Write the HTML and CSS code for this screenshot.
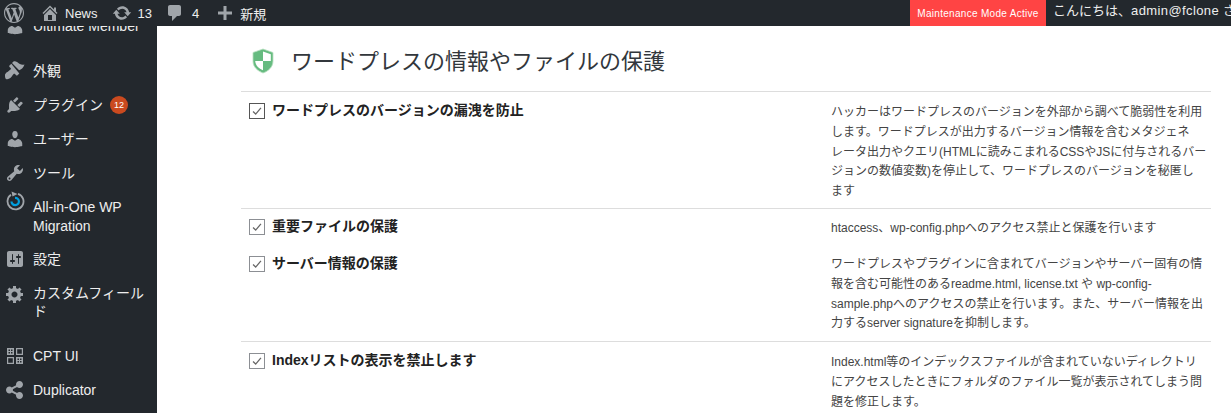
FILE: index.html
```html
<!DOCTYPE html>
<html lang="ja">
<head>
<meta charset="utf-8">
<title>ワードプレスの情報やファイルの保護</title>
<link rel="stylesheet" href="styles.css">
</head>
<body>
<header class="adminbar">
  <div class="bar-left">
    <svg class="bar-logo" viewBox="0 0 20 20"><path fill-rule="evenodd" d="M20 10c0-5.510-4.490-10-10-10C4.480 0 0 4.490 0 10c0 5.520 4.480 10 10 10 5.510 0 10-4.480 10-10zM7.780 15.370L4.370 6.220c.55-.02 1.170-.08 1.170-.08.500-.06.440-1.130-.06-1.110 0 0-1.450.110-2.370.110-.180 0-.370 0-.580-.01C4.120 2.690 6.890 1.160 10 1.160c2.320 0 4.430.870 6.010 2.300-.670-.110-1.620.38-1.620 1.540 0 .720.430 1.330.890 2.060.360.620.570 1.380.570 2.490 0 1.500-1.410 5.030-1.410 5.030L11.390 6.220c.550-.02.880-.17.880-.17.500-.06.440-1.250-.060-1.220 0 0-1.460.120-2.390.120-.860 0-2.330-.120-2.330-.120-.500-.03-.560 1.190-.060 1.220l.920.080 1.260 3.410zM17.410 10c.240-.640.740-1.870.430-4.250.700 1.290 1.050 2.710 1.050 4.250 0 3.290-1.730 6.240-4.480 7.820.910-2.430 1.820-4.870 3-7.820zM6.100 18.090C3.120 16.650 1.110 13.530 1.110 10c0-1.300.230-2.480.720-3.590C3.250 10.300 4.670 14.200 6.100 18.090zm4.030-6.630l2.580 6.980c-.870.290-1.770.450-2.710.450-.790 0-1.570-.110-2.290-.330.810-2.380 1.620-4.740 2.420-7.100z"/></svg>
    <a class="bar-item bar-news"><svg class="bar-icon" viewBox="0 0 20 20"><path d="M16 8.500l1.530 1.530-1.060 1.060L10 4.620l-6.470 6.470-1.060-1.060L10 2.500l4 4v-2h2v4zm-6-2.460l6 5.990V18H4v-5.970zM12 17v-5H8v5h4z"/></svg>News</a>
    <a class="bar-item bar-updates"><svg class="bar-icon" viewBox="0 0 20 20"><path d="M10.200 3.280c3.530 0 6.430 2.610 6.920 6h2.080l-3.500 4-3.500-4h2.320c-.45-1.970-2.210-3.450-4.320-3.450-1.450 0-2.730.71-3.540 1.780L4.950 5.660C6.230 4.200 8.110 3.280 10.200 3.280zm-.4 13.440c-3.520 0-6.430-2.610-6.920-6H.8l3.500-4c1.170 1.330 2.330 2.670 3.500 4H5.480c.45 1.970 2.210 3.450 4.320 3.450 1.450 0 2.730-.71 3.540-1.780l1.710 1.950c-1.280 1.460-3.150 2.380-5.250 2.380z"/></svg>13</a>
    <a class="bar-item bar-comments"><svg class="bar-icon" viewBox="0 0 20 20"><path d="M5 2h9c1.100 0 2 .9 2 2v7c0 1.100-.9 2-2 2h-2l-5 5v-5H5c-1.100 0-2-.9-2-2V4c0-1.100.9-2 2-2z"/></svg>4</a>
    <a class="bar-item bar-new"><svg class="bar-icon" viewBox="0 0 20 20"><path d="M17 8.500v3h-5.500V17h-3v-5.500H3v-3h5.500V3h3v5.500z"/></svg>新規</a>
  </div>
  <div class="bar-right">
    <span class="maintenance">Maintenance Mode Active</span>
    <span class="howdy">こんにちは、<span class="howdy-name">admin@fclone</span> さん</span>
  </div>
</header>
<div class="layout">
  <nav class="sidebar">
    <ul class="menu">
      <li class="menu-item sep-after"><svg class="menu-icon" viewBox="0 0 20 20"><path d="M10 9.250c-2.270 0-2.730-3.440-2.730-3.440C7 4.020 7.820 2 9.970 2c2.160 0 2.980 2.020 2.710 3.810 0 0-.41 3.440-2.680 3.440zm0 2.570L12.720 10c2.390 0 4.520 2.330 4.520 4.530v2.490s-3.650 1.130-7.240 1.130c-3.650 0-7.240-1.130-7.240-1.130v-2.490c0-2.250 1.940-4.480 4.470-4.480z"/></svg><span>Ultimate Member</span></li>
      <li class="menu-item"><svg class="menu-icon" viewBox="0 0 20 20"><path d="M19.500 3.500c-2 .6-3.300.2-4.600-.5-1.400-.8-1.700-1.300-2.900-2.100-1.200-.8-3-.9-3.500-.3L7 2.100l7.100 7.100c2-.4 4.300-2.500 5.400-5.700zM6.300 2.800L4.500 4.600c-.4.400-.4 1 0 1.400l1.100 1.100c.4.400.4 1 0 1.400-.6.600-1.400 1.100-2.200 1.700-.4.300-.7.500-1 .8C1 11.400 0 13.500 0 13.500s-.3 3.400 1 4.500c1.500 1 4.100-.7 5.100-1.700.3-.3.600-.7.800-1 .6-.8 1.100-1.600 1.700-2.200.4-.4 1-.4 1.400 0l1.100 1.100c.4.400 1 .4 1.400 0l1.800-1.800z"/></svg><span>外観</span></li>
      <li class="menu-item"><svg class="menu-icon" viewBox="0 0 20 20"><path d="M13.110 4.360L9.870 7.600 8 5.730l3.240-3.240c.35-.34 1.050-.2 1.560.32.52.51.66 1.210.31 1.550zm-8 1.770l.91-1.120 9.010 9.010-1.190.84c-.71.71-2.630 1.160-3.820 1.160H6.140L4.900 17.260c-.59.59-1.540.59-2.120 0-.59-.58-.59-1.530 0-2.120l1.240-1.240v-3.880c0-1.130.4-3.190 1.090-3.890zm7.260 3.970l3.240-3.240c.34-.35 1.040-.21 1.550.31.52.51.66 1.210.31 1.550l-3.240 3.250z"/></svg><span>プラグイン</span><span class="badge">12</span></li>
      <li class="menu-item"><svg class="menu-icon" viewBox="0 0 20 20"><path d="M10 9.250c-2.270 0-2.730-3.440-2.730-3.440C7 4.020 7.820 2 9.970 2c2.160 0 2.980 2.020 2.710 3.810 0 0-.41 3.440-2.680 3.440zm0 2.570L12.720 10c2.390 0 4.520 2.330 4.520 4.530v2.490s-3.650 1.130-7.240 1.130c-3.650 0-7.240-1.130-7.240-1.130v-2.490c0-2.250 1.940-4.480 4.470-4.480z"/></svg><span>ユーザー</span></li>
      <li class="menu-item"><svg class="menu-icon" viewBox="0 0 20 20"><path d="M16.680 9.770c-1.340 1.340-3.300 1.670-4.950.99l-5.410 6.520c-.99.99-2.590.99-3.580 0s-.99-2.590 0-3.570l6.520-5.420c-.68-1.650-.35-3.610.99-4.950 1.280-1.280 3.120-1.620 4.720-1.060l-2.890 2.890 2.820 2.820 2.860-2.870c.53 1.580.18 3.390-1.080 4.650zM3.810 16.210c.4.39 1.040.39 1.430 0 .4-.4.4-1.040 0-1.430-.39-.4-1.030-.4-1.430 0-.39.39-.39 1.030 0 1.430z"/></svg><span>ツール</span></li>
      <li class="menu-item menu-item-tall"><svg class="menu-icon menu-icon-top" viewBox="0 0 20 20"><path fill="none" stroke="#a0a5aa" stroke-width="1.800" d="M6 3.800A8 8 0 1 0 13 2.800"/><path fill="#a0a5aa" d="M6.500 .5l6 2.500-5 2.500z"/><path fill="none" stroke="#00a0e0" stroke-width="2.200" d="M6.500 10.500A3.700 3.700 0 1 0 10 6.800"/></svg><span class="menu-text-low">All-in-One WP Migration</span></li>
      <li class="menu-item"><svg class="menu-icon" viewBox="0 0 20 20"><path d="M18 16V4c0-1.100-.9-2-2-2H4c-1.100 0-2 .9-2 2v12c0 1.100.9 2 2 2h12c1.100 0 2-.9 2-2zM8 11h1c.55 0 1 .45 1 1s-.45 1-1 1H8v1.500c0 .28-.22.5-.5.5s-.5-.22-.5-.5V13H6c-.55 0-1-.45-1-1s.45-1 1-1h1V5.500c0-.28.22-.5.5-.5s.5.22.5.5V11zm5-2h-1c-.55 0-1-.45-1-1s.45-1 1-1h1V5.500c0-.28.22-.5.5-.5s.5.22.5.5V7h1c.55 0 1 .45 1 1s-.45 1-1 1h-1v5.500c0 .28-.22.5-.5.5s-.5-.22-.5-.5V9z"/></svg><span>設定</span></li>
      <li class="menu-item menu-item-wrap sep-after-lg"><svg class="menu-icon" viewBox="0 0 20 20"><path fill-rule="evenodd" d="M18 12h-2.180c-.17.7-.44 1.350-.81 1.930l1.540 1.540-2.100 2.100-1.540-1.540c-.58.36-1.230.63-1.910.79V19H8v-2.180c-.68-.16-1.330-.43-1.910-.79l-1.540 1.540-2.120-2.120 1.540-1.540c-.36-.58-.63-1.230-.79-1.910H1V9.030h2.170c.16-.7.44-1.350.8-1.940L2.430 5.550l2.100-2.100 1.540 1.540c.58-.37 1.240-.64 1.930-.81V2h3v2.180c.68.16 1.330.43 1.910.79l1.540-1.540 2.120 2.120-1.540 1.540c.36.59.64 1.240.8 1.940H18V12zm-8.500 1.500c1.660 0 3-1.340 3-3s-1.340-3-3-3-3 1.340-3 3 1.340 3 3 3z"/></svg><span>カスタムフィールド</span></li>
      <li class="menu-item"><svg class="menu-icon" viewBox="0 0 20 20"><path fill-rule="evenodd" d="M2 2h7v7H2zm1.500 1.500v1.500H5V3.500zm2.500 0v1.500h1.500V3.500zM3.500 6v1.500H5V6zM6 6v1.500h1.500V6zM11 2h7v7h-7zm1.200 1.200v4.600h4.600V3.200zM2 11h7v7H2zm1.200 1.200v4.600h4.600v-4.600zM11 11h7v7h-7zm1.500 1.500V14H14v-1.500zm2.500 0V14h1.500v-1.500zM12.500 15v1.500H14V15zm2.500 0v1.500h1.500V15z"/></svg><span>CPT UI</span></li>
      <li class="menu-item"><svg class="menu-icon" viewBox="0 0 20 20"><path d="M14.500 1C16.430 1 18 2.570 18 4.500S16.430 8 14.500 8c-.97 0-1.850-.4-2.480-1.040L7.800 9.280c.13.23.2.47.2.72s-.07.49-.2.720l4.220 2.320C12.650 12.400 13.530 12 14.500 12c1.930 0 3.500 1.570 3.500 3.500S16.430 19 14.500 19 11 17.430 11 15.500c0-.23.02-.45.06-.66l-4.290-2.360c-.64.59-1.440 1.020-2.270 1.020C2.570 13.500 1 11.930 1 10s1.570-3.500 3.500-3.500c.83 0 1.630.43 2.270 1.020l4.290-2.360C11.020 4.950 11 4.730 11 4.500 11 2.570 12.570 1 14.500 1z"/></svg><span>Duplicator</span></li>
    </ul>
  </nav>
  <main class="content">
    <div class="title-row">
      <svg class="shield" viewBox="0 0 24 26">
        <path fill="#66bb80" stroke="#b9dfc0" stroke-width=".8" d="M12 1l10 3.500V13c0 6-4.500 10-10 12C6.500 23 2 19 2 13V4.500z"/>
        <path fill="#fff" d="M12 3.500l7.800 2.700V13H12zM12 13v9.200C8 20.500 4.400 17.500 4.200 13z"/>
      </svg>
      <h1 class="title">ワードプレスの情報やファイルの保護</h1>
    </div>
    <section class="options">
      <div class="row">
        <label class="opt"><span class="check dark"><svg viewBox="0 0 16 16"><path d="M3.500 8.500l3 3 6-7"/></svg></span><strong>ワードプレスのバージョンの漏洩を防止</strong></label>
        <p class="desc">ハッカーはワードプレスのバージョンを外部から調べて脆弱性を利用<br>します。ワードプレスが出力するバージョン情報を含むメタジェネ<br>レータ出力やクエリ(HTMLに読みこまれるCSSやJSに付与されるバー<br>ジョンの数値変数)を停止して、ワードプレスのバージョンを秘匿し<br>ます</p>
      </div>
      <div class="row">
        <label class="opt opt-short"><span class="check"><svg viewBox="0 0 16 16"><path d="M3.500 8.500l3 3 6-7"/></svg></span><strong>重要ファイルの保護</strong></label>
        <p class="desc desc-short">htaccess、wp-config.phpへのアクセス禁止と保護を行います</p>
      </div>
      <div class="row row-joined">
        <label class="opt"><span class="check"><svg viewBox="0 0 16 16"><path d="M3.500 8.500l3 3 6-7"/></svg></span><strong>サーバー情報の保護</strong></label>
        <p class="desc">ワードプレスやプラグインに含まれてバージョンやサーバー固有の情<br>報を含む可能性のあるreadme.html, license.txt や wp-config-<br>sample.phpへのアクセスの禁止を行います。また、サーバー情報を出<br>力するserver signatureを抑制します。</p>
      </div>
      <div class="row">
        <label class="opt"><span class="check"><svg viewBox="0 0 16 16"><path d="M3.500 8.500l3 3 6-7"/></svg></span><strong>Indexリストの表示を禁止します</strong></label>
        <p class="desc">Index.html等のインデックスファイルが含まれていないディレクトリ<br>にアクセスしたときにフォルダのファイル一覧が表示されてしまう問<br>題を修正します。</p>
      </div>
    </section>
  </main>
</div>
</body>
</html>
```

FILE: styles.css
```css
* { box-sizing: border-box; }
html, body { margin: 0; height: 100%; overflow: hidden; }
body {
  font-family: "Liberation Sans", "Noto Sans CJK JP", sans-serif;
  font-size: 14px;
  color: #222;
  background: #fff;
  display: flex;
  flex-direction: column;
}
.adminbar {
  height: 26px;
  flex: none;
  background: #23282d;
  display: flex;
  justify-content: space-between;
  color: #eee;
  font-size: 13px;
}
.bar-left { display: flex; align-items: center; padding-left: 4px; }
.bar-logo { width: 20px; height: 20px; fill: #a0a5aa; margin-right: 16px; }
.bar-item { display: flex; align-items: center; }
.bar-icon { width: 20px; height: 20px; fill: #a0a5aa; margin-right: 5px; }
.bar-news { margin-right: 14px; }
.bar-updates { margin-right: 13px; }
.bar-updates .bar-icon { margin-right: 6px; }
.bar-comments { margin-right: 16px; }
.bar-comments .bar-icon { margin-right: 7px; }
.bar-right { display: flex; width: 321px; flex: none; overflow: hidden; }
.maintenance {
  width: 136px;
  flex: none;
  background: #f44;
  color: #fff;
  font-size: 10px;
  letter-spacing: .3px;
  display: flex;
  align-items: center;
  justify-content: center;
}
.howdy { flex: none; padding-left: 7px; line-height: 21px; white-space: nowrap; font-size: 13px; }
.howdy-name { letter-spacing: .4px; }
.layout { flex: 1; display: flex; min-height: 0; }
.sidebar {
  width: 157px;
  flex: none;
  background: #23282d;
  overflow: hidden;
  color: #eee;
}
.menu { list-style: none; margin: -17px 0 0; padding: 0; }
.menu-item {
  min-height: 34px;
  display: flex;
  align-items: center;
  padding-left: 5px;
  line-height: 19px;
}
.menu-item-tall { min-height: 52px; }
.menu-text-low { padding-top: 1px; }
.menu-item-wrap { min-height: 48px; align-items: flex-start; padding-top: 8px; line-height: 18px; }
.sep-after { margin-bottom: 11px; }
.sep-after-lg { margin-bottom: 15px; }
.menu-icon { width: 20px; height: 20px; flex: none; fill: #a0a5aa; margin-right: 8px; }
.menu-icon-top { align-self: flex-start; margin-top: 1px; }
.badge {
  margin-left: 7px;
  width: 18px;
  height: 18px;
  border-radius: 50%;
  background: #ca4a1f;
  color: #fff;
  font-size: 9px;
  line-height: 18px;
  text-align: center;
}
.content { flex: 1; min-width: 0; padding: 0 20px 0 84px; }
.title-row { height: 65px; display: flex; align-items: center; padding-left: 10px; padding-top: 5px; }
.shield { width: 24px; height: 26px; flex: none; margin-right: 16px; }
.title { margin: 0; padding-bottom: 5px; font-size: 22px; font-weight: 400; color: #32373c; }
.row {
  display: grid;
  grid-template-columns: 590px 1fr;
  border-top: 1px solid #ddd;
  padding: 0 8px;
}
.row-joined { border-top: 0; }
.opt { display: flex; align-items: flex-start; gap: 7px; padding-top: 10px; line-height: 16px; }
.opt-short { padding-top: 9px; }
.opt strong { font-weight: 700; color: #222; }
.check {
  width: 16px;
  height: 16px;
  flex: none;
  border: 1px solid #8c8f94;
  background: #fff;
  margin-top: 1px;
}
.check.dark { border-color: #555; }
.check svg { display: block; width: 14px; height: 14px; fill: none; stroke: #666; stroke-width: 1.5; }
.desc {
  margin: 0 0 0 -8px;
  padding: 11px 0 6px;
  font-size: 12px;
  line-height: 19.8px;
  color: #444;
  white-space: nowrap;
}
.desc-short { padding: 10px 0 6.2px; }
.row-joined .desc { padding: 10px 0 6.8px; }
```
